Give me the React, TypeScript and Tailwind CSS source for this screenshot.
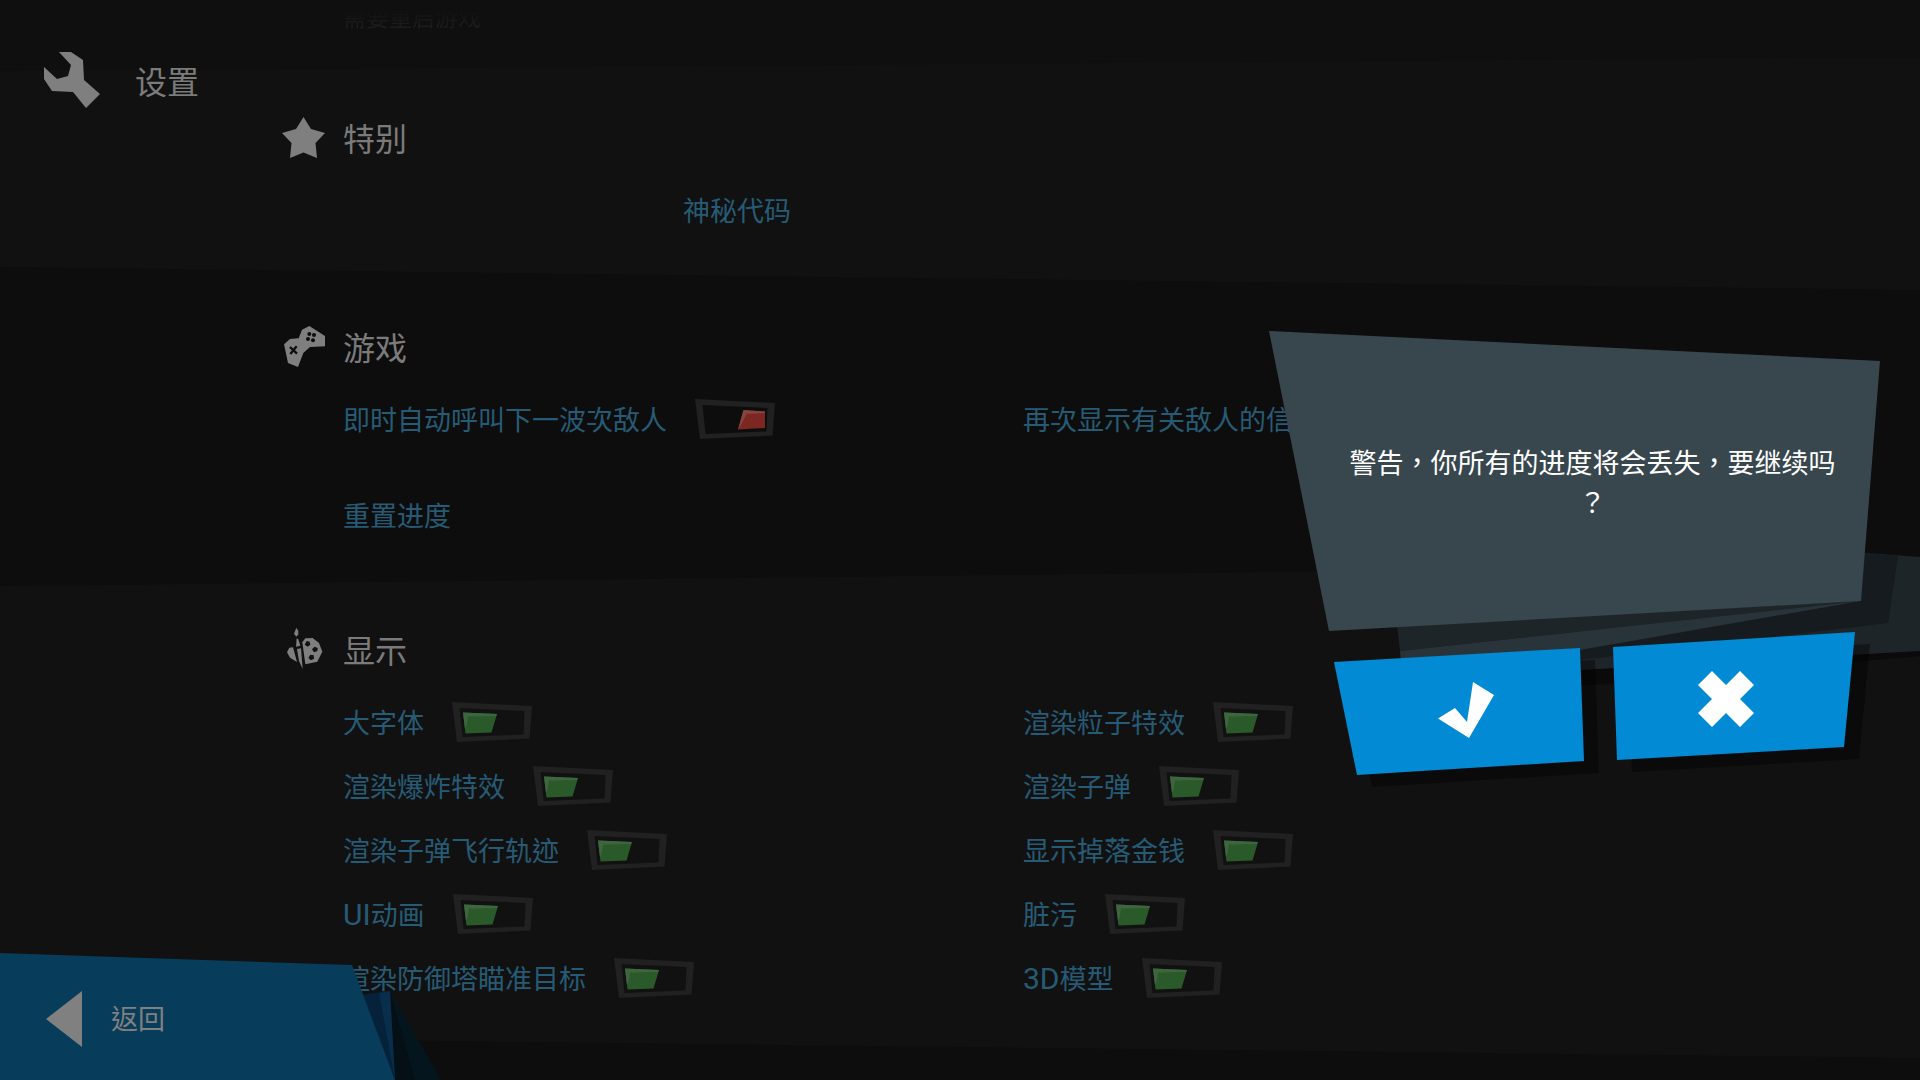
import { useState, type ReactNode } from "react";

type Option = { label: ReactNode; on: boolean };

const gameOptions: Option[] = [
  { label: "即时自动呼叫下一波次敌人", on: false },
  { label: "再次显示有关敌人的信息", on: true },
];

const displayOptions: Option[] = [
  { label: "大字体", on: true },
  { label: "渲染粒子特效", on: true },
  { label: "渲染爆炸特效", on: true },
  { label: "渲染子弹", on: true },
  { label: "渲染子弹飞行轨迹", on: true },
  { label: "显示掉落金钱", on: true },
  { label: <><Latin>UI</Latin>动画</>, on: true },
  { label: "脏污", on: true },
  { label: "渲染防御塔瞄准目标", on: true },
  { label: <><Latin>3D</Latin>模型</>, on: true },
];

function Latin({ children }: { children: ReactNode }) {
  return <span className="font-['Roboto',sans-serif] text-[30px]">{children}</span>;
}

function WrenchIcon() {
  return (
    <svg viewBox="44 52 56 56" className="h-14 w-14 fill-[#7f7f7f]" aria-hidden="true">
      <path d="M59 52H71L83 60L84 80L100 94L86 108L73 92L52 91L44 79V67L57 79L68 76L71 65Z" />
    </svg>
  );
}

function StarIcon() {
  return (
    <svg viewBox="281 115 44 44" className="h-11 w-11 fill-[#7f7f7f]" aria-hidden="true">
      <path d="M303.5 117L311 129L325 133L315.5 143L317 158L303.5 152.500L290 158L291.500 143L282 133L296 129Z" />
    </svg>
  );
}

function GamepadIcon() {
  return (
    <svg viewBox="33 43 132 132" className="h-11 w-11 fill-[#7f7f7f]" aria-hidden="true">
      <path d="M118 49L165 79L167 110L120 112L100 130L84 172L54 160L42 104L60 88L86 86L96 60Z" />
      <g className="fill-[#0d0d0d]">
        <circle cx="118" cy="73" r="6" />
        <circle cx="132" cy="76" r="6" />
        <circle cx="114" cy="88" r="6" />
        <circle cx="129" cy="92" r="6" />
      </g>
      <path d="M60 112L81 132M80 110L61 133" className="stroke-[#0d0d0d]" strokeWidth="7" />
    </svg>
  );
}

function PaletteIcon() {
  return (
    <svg viewBox="33 42 132 132" className="h-11 w-11 fill-[#7f7f7f]" aria-hidden="true">
      <path d="M79 44L85 54V64L79 71L72 62Z" />
      <path d="M80 76L85 79L91 98L78 101Z" />
      <path d="M51 118L58 104L69 103L81 147L60 134Z" />
      <path d="M81 108L93 106L98 168L87 144Z" />
      <path d="M97 88L106 76L128 75L147 90L157 116L142 146L106 154Z" />
      <g className="fill-[#111111]">
        <path d="M110 84L119 86L121 95L113 101L104 95Z" />
        <path d="M134 101L143 105L142 114L132 118L126 109Z" />
        <path d="M121 125L131 127L132 137L123 142L115 135Z" />
      </g>
    </svg>
  );
}

function Toggle({ label, on }: Option) {
  const [checked, setChecked] = useState(on);

  return (
    <label className="flex h-16 items-center gap-7 whitespace-nowrap">
      <span>{label}</span>
      <span className="relative h-10 w-20">
        <input
          type="checkbox"
          checked={checked}
          onChange={(e) => setChecked(e.target.checked)}
          className="absolute inset-0 h-full w-full cursor-pointer opacity-0"
        />
        <svg viewBox="0 0 80 40" className="h-10 w-20" aria-hidden="true">
          <path d="M0 0L80 4L77.5 36.500L5 40ZM7.500 6L10.500 35L71.500 32.500L72.500 9Z" fillRule="evenodd" fill="#212121" />
          {checked ? (
            <>
              <path d="M11 10.500L45 12L39.500 30.500L13.500 31.500Z" fill="#2b5a2a" />
              <path d="M11 10.500L45 12L44 14L16 14.500L14.500 24L13 27Z" fill="#3f6540" />
            </>
          ) : (
            <>
              <path d="M48.500 11L70 12.500V29L43 30.500Z" fill="#7c2722" />
              <path d="M48.500 11L70 12.500V14L51.500 15L46 26L43 30.500Z" fill="#864540" />
            </>
          )}
        </svg>
      </span>
    </label>
  );
}

function SectionHeading({ icon, children }: { icon: ReactNode; children: ReactNode }) {
  return (
    <h2 className="flex h-20 items-center gap-[18px] pb-0.5 text-[32px] text-[#7b7b7b]">
      {icon}
      {children}
    </h2>
  );
}

function BackButton() {
  return (
    <div className="absolute bottom-0 left-0">
      <svg viewBox="360 990 82 90" className="absolute bottom-0 left-[360px] h-[90px] w-[82px]" aria-hidden="true">
        <path d="M390 991L441 1080H394Z" fill="#05151e" />
        <path d="M390 991L415 1080H394Z" fill="#040f16" />
        <path d="M360 995L390 991L395 1080Z" fill="#06213a" />
        <path d="M379 993L390 991L395 1080Z" fill="#082e4b" />
      </svg>
      <button
        type="button"
        className="relative flex h-[127px] w-[395px] cursor-pointer items-center gap-[29px] bg-[#073c5a] pl-[46px] pt-1 text-[27px] text-[#808080] [clip-path:polygon(0_0,352px_12px,100%_100%,0_100%)]"
      >
        <svg viewBox="0 0 36 56" className="h-14 w-9 fill-[#808080]" aria-hidden="true">
          <path d="M0 28L36 0V56Z" />
        </svg>
        返回
      </button>
    </div>
  );
}

function ConfirmDialog() {
  return (
    <>
      <svg viewBox="1397 551 523 139" className="absolute right-0 top-[551px] h-[139px] w-[523px]" aria-hidden="true">
        <path d="M1580 665L1920 648V656L1613 684L1580 685Z" fill="#0a0a0a" />
        <path d="M1840 551L1920 557V651L1580 670V620Z" fill="#1e2529" />
        <path d="M1840 551L1898 556L1888 623L1580 660V620Z" fill="#151b1e" />
        <path d="M1397 625L1861 601L1400 651Z" fill="#1e2529" />
        <path d="M1400 651L1861 601L1580 650L1401 662Z" fill="#29343a" />
      </svg>
      <div role="alertdialog" aria-labelledby="confirm-text" className="absolute right-10 top-[331px] w-[611px]">
        <div className="flex h-[300px] items-center justify-center bg-[#38464e] pl-9 pt-0.5 [clip-path:polygon(0_0,100%_30px,592px_270px,60px_100%)]">
          <p id="confirm-text" className="whitespace-nowrap text-center text-[27px] leading-10 text-white">
            警告，你所有的进度将会丢失，要继续吗
            <br />
            ？
          </p>
        </div>
        <div className="flex gap-[29px] pl-[65px] pt-px">
          <div className="pt-4 drop-shadow-[15px_12px_0_rgba(0,0,0,0.4)]">
            <button
              type="button"
              aria-label="确定"
              className="flex h-[127px] w-[250px] cursor-pointer items-center justify-center bg-[#038ad5] pb-1 pl-3.5 [clip-path:polygon(0_14px,246px_0,100%_113px,23px_100%)]"
            >
              <svg viewBox="1438 681 56 56" className="h-14 w-14 fill-white" aria-hidden="true">
                <path d="M1438 717.500L1455 707L1467 721L1473 681L1494 694L1469 737Z" />
              </svg>
            </button>
          </div>
          <div className="drop-shadow-[15px_12px_0_rgba(0,0,0,0.4)]">
            <button
              type="button"
              aria-label="取消"
              className="flex h-32 w-[242px] cursor-pointer items-center justify-center bg-[#038ad5] pr-4 pt-1.5 [clip-path:polygon(0_15px,100%_0,231px_115px,4px_100%)]"
            >
              <svg viewBox="0 0 56 56" className="h-14 w-14 fill-white" aria-hidden="true">
                <path d="M0 14L14 0L28 14L42 0L56 14L42 28L56 42L42 56L28 42L14 56L0 42L14 28Z" />
              </svg>
            </button>
          </div>
        </div>
      </div>
    </>
  );
}

export default function App() {
  return (
    <div
      lang="zh-Hant"
      className="relative min-h-screen overflow-hidden bg-[#0d0d0d] font-['Noto_Sans_CJK_TC',sans-serif] text-[27px] text-[#275b75]"
    >
      <header className="absolute left-11 top-[52px] z-10 flex items-center gap-[35px]">
        <WrenchIcon />
        <h1 className="text-[32px] leading-[56px] text-[#7b7b7b]">设置</h1>
      </header>

      <main>
        <div className="bg-[#0f0f0f]">
          <div className="h-[57px] pl-[343px]">
            <p className="bg-linear-to-b from-[#0f0f0f] from-30% to-[#202122] bg-clip-text text-[23px] leading-8 text-transparent">需要重启游戏</p>
          </div>

          <section className="bg-[#111111] pb-12 pl-[281px] pr-[217px] pt-[41px] [clip-path:polygon(0_14px,100%_0,100%_100%,0_100%)]">
            <SectionHeading icon={<StarIcon />}>特别</SectionHeading>
            <div className="grid grid-cols-4 pl-[62px]">
              <button type="button" className="col-start-2 h-16 cursor-pointer text-left">
                神秘代码
              </button>
            </div>
          </section>
          <div className="-mt-[23px] h-[23px] bg-[#0d0d0d] [clip-path:polygon(0_0,100%_100%,0_100%)]" />
        </div>

        <section className="pb-[18px] pl-[281px] pr-[217px] pt-[17px]">
          <SectionHeading icon={<GamepadIcon />}>游戏</SectionHeading>
          <div className="grid grid-cols-2 gap-y-8 pl-[62px]">
            {gameOptions.map((option, i) => (
              <Toggle key={i} {...option} />
            ))}
            <button type="button" className="h-16 cursor-pointer text-left">
              重置进度
            </button>
          </div>
        </section>

        <section className="bg-[#111111] pb-12 pl-[281px] pr-[217px] pt-[45px] [clip-path:polygon(0_21px,100%_0,100%_100%,0_calc(100%-22px))]">
          <SectionHeading icon={<PaletteIcon />}>显示</SectionHeading>
          <div className="grid grid-cols-2 pl-[62px]">
            {displayOptions.map((option, i) => (
              <Toggle key={i} {...option} />
            ))}
          </div>
        </section>
      </main>

      <BackButton />
      <ConfirmDialog />
    </div>
  );
}
